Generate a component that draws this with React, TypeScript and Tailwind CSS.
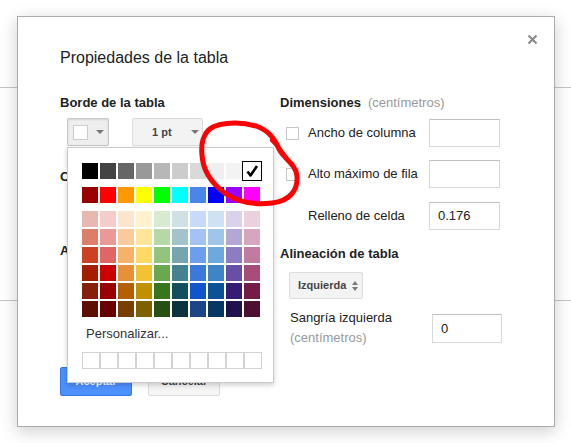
// Table properties dialog with open border-colour palette

const GRAYS = ["#000000", "#434343", "#666666", "#999999", "#b7b7b7", "#cccccc", "#d9d9d9", "#efefef", "#f3f3f3", "#ffffff"];
const BASE = ["#980000", "#ff0000", "#ff9900", "#ffff00", "#00ff00", "#00ffff", "#4a86e8", "#0000ff", "#9900ff", "#ff00ff"];
const SHADES = [
  ["#e6b8af", "#f4cccc", "#fce5cd", "#fff2cc", "#d9ead3", "#d0e0e3", "#c9daf8", "#cfe2f3", "#d9d2e9", "#ead1dc"],
  ["#dd7e6b", "#ea9999", "#f9cb9c", "#ffe599", "#b6d7a8", "#a2c4c9", "#a4c2f4", "#9fc5e8", "#b4a7d6", "#d5a6bd"],
  ["#cc4125", "#e06666", "#f6b26b", "#ffd966", "#93c47d", "#76a5af", "#6d9eeb", "#6fa8dc", "#8e7cc3", "#c27ba0"],
  ["#a61c00", "#cc0000", "#e69138", "#f1c232", "#6aa84f", "#45818e", "#3c78d8", "#3d85c6", "#674ea7", "#a64d79"],
  ["#85200c", "#990000", "#b45f06", "#bf9000", "#38761d", "#134f5c", "#1155cc", "#0b5394", "#351c75", "#741b47"],
  ["#5b0f00", "#660000", "#783f04", "#7f6000", "#274e13", "#0c343d", "#1c4587", "#073763", "#20124d", "#4c1130"],
];

function Caret() {
  return <span className="w-0 h-0 border-l-[4px] border-r-[4px] border-t-[4px] border-l-transparent border-r-transparent border-t-[#777]" />;
}

function Swatch({ color, selected }: { color: string; selected?: boolean }) {
  if (selected) {
    return (
      <div className="w-4 h-4 bg-white outline outline-1 outline-black outline-offset-[1px] flex items-center justify-center">
        <svg width="14" height="14" viewBox="0 0 14 14">
          <path d="M2.5 7.5 L5.5 11.5 L12 2" fill="none" stroke="#000" strokeWidth="2.6" strokeLinejoin="round" />
        </svg>
      </div>
    );
  }
  return <div className="w-4 h-4" style={{ backgroundColor: color }} />;
}

function Palette() {
  return (
    <div className="absolute left-0 top-[29px] z-10 w-[207px] h-[236px] bg-white border border-[#ccc] shadow-[0_2px_5px_rgba(0,0,0,0.2)] pl-[14px] pt-[15px]">
      <div className="flex gap-[2px]">
        {GRAYS.map((c, i) => (
          <Swatch key={c} color={c} selected={i === GRAYS.length - 1} />
        ))}
      </div>
      <div className="flex gap-[2px] mt-[8px]">
        {BASE.map((c) => (
          <Swatch key={c} color={c} />
        ))}
      </div>
      <div className="flex flex-col gap-[2px] mt-[8px]">
        {SHADES.map((row, r) => (
          <div key={r} className="flex gap-[2px]">
            {row.map((c) => (
              <Swatch key={c} color={c} />
            ))}
          </div>
        ))}
      </div>
      <div className="mt-[9px] pl-[4px] text-[13px] leading-[16px] text-[#333]">Personalizar...</div>
      <div className="mt-[10px] flex">
        {Array.from({ length: 10 }).map((_, i) => (
          <div key={i} className="w-[18px] h-[17px] border border-[#d3d3d3]" />
        ))}
      </div>
    </div>
  );
}

function TextBox({ value, className }: { value?: string; className: string }) {
  return (
    <div className={`border border-[#d9d9d9] border-t-[#c0c0c0] bg-white pl-[8px] flex items-center text-[13px] text-[#222] ${className}`}>
      {value}
    </div>
  );
}

function CheckBox() {
  return <span className="ml-[6px] w-[13px] h-[13px] border border-[#c6c6c6] bg-white shrink-0" />;
}

export default function App() {
  return (
    <div className="relative w-[571px] h-[443px] bg-white overflow-hidden font-['Liberation_Sans',Arial,sans-serif] text-[#222]">
      {/* page behind the dialog */}
      <div className="pt-[87px]">
        <div className="border-t border-[#c4c4c4] h-[213px]" />
        <div className="border-t border-[#c4c4c4]" />
      </div>

      {/* dialog */}
      <div className="absolute left-[17px] top-[16px] w-[538px] h-[411px] bg-white border border-[#acacac] shadow-[0_4px_16px_rgba(0,0,0,0.2)] pl-[42px] pt-[31px]">
        <button className="absolute top-[17px] right-[16px] w-[11px] h-[11px]">
          <svg width="11" height="11" viewBox="0 0 11 11">
            <path d="M1.5 1.5 L9.5 9.5 M9.5 1.5 L1.5 9.5" stroke="#8c8c8c" strokeWidth="2.2" />
          </svg>
        </button>

        <div className="text-[16px] leading-[20px]">Propiedades de la tabla</div>

        <div className="flex mt-[27px]">
          {/* left column */}
          <div className="w-[220px] shrink-0">
            <div className="text-[13px] leading-[16px] font-bold">Borde de la tabla</div>
            <div className="flex gap-[23px] mt-[7px] ml-[7px]">
              <div className="relative">
                <div className="w-[42px] h-[28px] rounded-[2px] border border-[#c6c6c6] bg-[#eeeeee] shadow-[inset_0_1px_2px_rgba(0,0,0,0.1)] flex items-center pl-[5px] gap-[8px]">
                  <span className="w-[15px] h-[15px] bg-white border border-[#ccc]" />
                  <Caret />
                </div>
                <Palette />
              </div>
              <div className="w-[71px] h-[28px] rounded-[2px] border border-[#dcdcdc] bg-[#f3f3f3] flex items-center pl-[19px]">
                <span className="text-[11px] font-bold text-[#444] w-[39px]">1 pt</span>
                <Caret />
              </div>
            </div>
            <div className="mt-[23px] text-[13px] leading-[16px] font-bold">Color de fondo de celda</div>
            <div className="mt-[7px] h-[28px]" />
            <div className="mt-[23px] text-[13px] leading-[16px] font-bold">Alineación vertical de celda</div>
            <div className="mt-[10px] h-[27px]" />
          </div>

          {/* right column */}
          <div className="flex-1">
            <div className="text-[13px] leading-[16px] flex">
              <span className="font-bold">Dimensiones</span>
              <span className="ml-[7px] text-[#999]">(centímetros)</span>
            </div>
            <div className="mt-[8px] flex items-center h-[28px]">
              <CheckBox />
              <span className="ml-[9px] w-[121px] text-[13px]">Ancho de columna</span>
              <TextBox className="w-[71px] h-[28px]" />
            </div>
            <div className="mt-[13px] flex items-center h-[28px]">
              <CheckBox />
              <span className="ml-[9px] w-[121px] text-[13px]">Alto máximo de fila</span>
              <TextBox className="w-[71px] h-[28px]" />
            </div>
            <div className="mt-[14px] flex items-center h-[28px]">
              <span className="ml-[28px] w-[121px] text-[13px]">Relleno de celda</span>
              <TextBox value="0.176" className="w-[71px] h-[28px]" />
            </div>
            <div className="mt-[16px] text-[13px] leading-[16px] font-bold">Alineación de tabla</div>
            <div className="mt-[10px] ml-[9px] w-[74px] h-[27px] rounded-[2px] border border-[#dcdcdc] bg-[#f3f3f3] flex items-center pl-[8px] gap-[6px]">
              <span className="text-[11px] font-bold text-[#444]">Izquierda</span>
              <span className="flex flex-col gap-[2px]">
                <span className="w-0 h-0 border-l-[3.5px] border-r-[3.5px] border-b-[4px] border-l-transparent border-r-transparent border-b-[#777]" />
                <span className="w-0 h-0 border-l-[3.5px] border-r-[3.5px] border-t-[4px] border-l-transparent border-r-transparent border-t-[#777]" />
              </span>
            </div>
            <div className="mt-[9px] flex">
              <div className="ml-[10px] w-[142px] text-[13px] leading-[20px]">
                <div>Sangría izquierda</div>
                <div className="text-[#999]">(centímetros)</div>
              </div>
              <TextBox value="0" className="mt-[6px] w-[70px] h-[29px]" />
            </div>
          </div>
        </div>

        {/* footer buttons */}
        <div className="mt-[19px] flex gap-[16px]">
          <button className="w-[72px] h-[29px] rounded-[2px] bg-[#4d90fe] border border-[#3079ed] text-white text-[11px] font-bold">
            Aceptar
          </button>
          <button className="w-[72px] h-[29px] rounded-[2px] bg-[#f5f5f5] border border-[#dcdcdc] text-[#444] text-[11px] font-bold">
            Cancelar
          </button>
        </div>
      </div>

      {/* hand-drawn red annotation */}
      <svg className="absolute left-0 top-0 pointer-events-none z-20" width="571" height="443" viewBox="0 0 571 443">
        <path
          d="M206 133 C213 122 238 121 256 126 C268 130 275 139 279 149 C283 158 296 164 297 176 C298 190 290 201 272 203 C255 205 238 202 226 194 C212 184 203 172 202 155 C201 145 202 138 207 132"
          fill="none"
          stroke="#ff0000"
          strokeWidth="5"
          strokeLinecap="round"
          strokeLinejoin="round"
        />
        <path d="M272 140 C278 146 282 152 286 158" fill="none" stroke="#ff0000" strokeWidth="4.5" strokeLinecap="round" />
      </svg>
    </div>
  );
}
